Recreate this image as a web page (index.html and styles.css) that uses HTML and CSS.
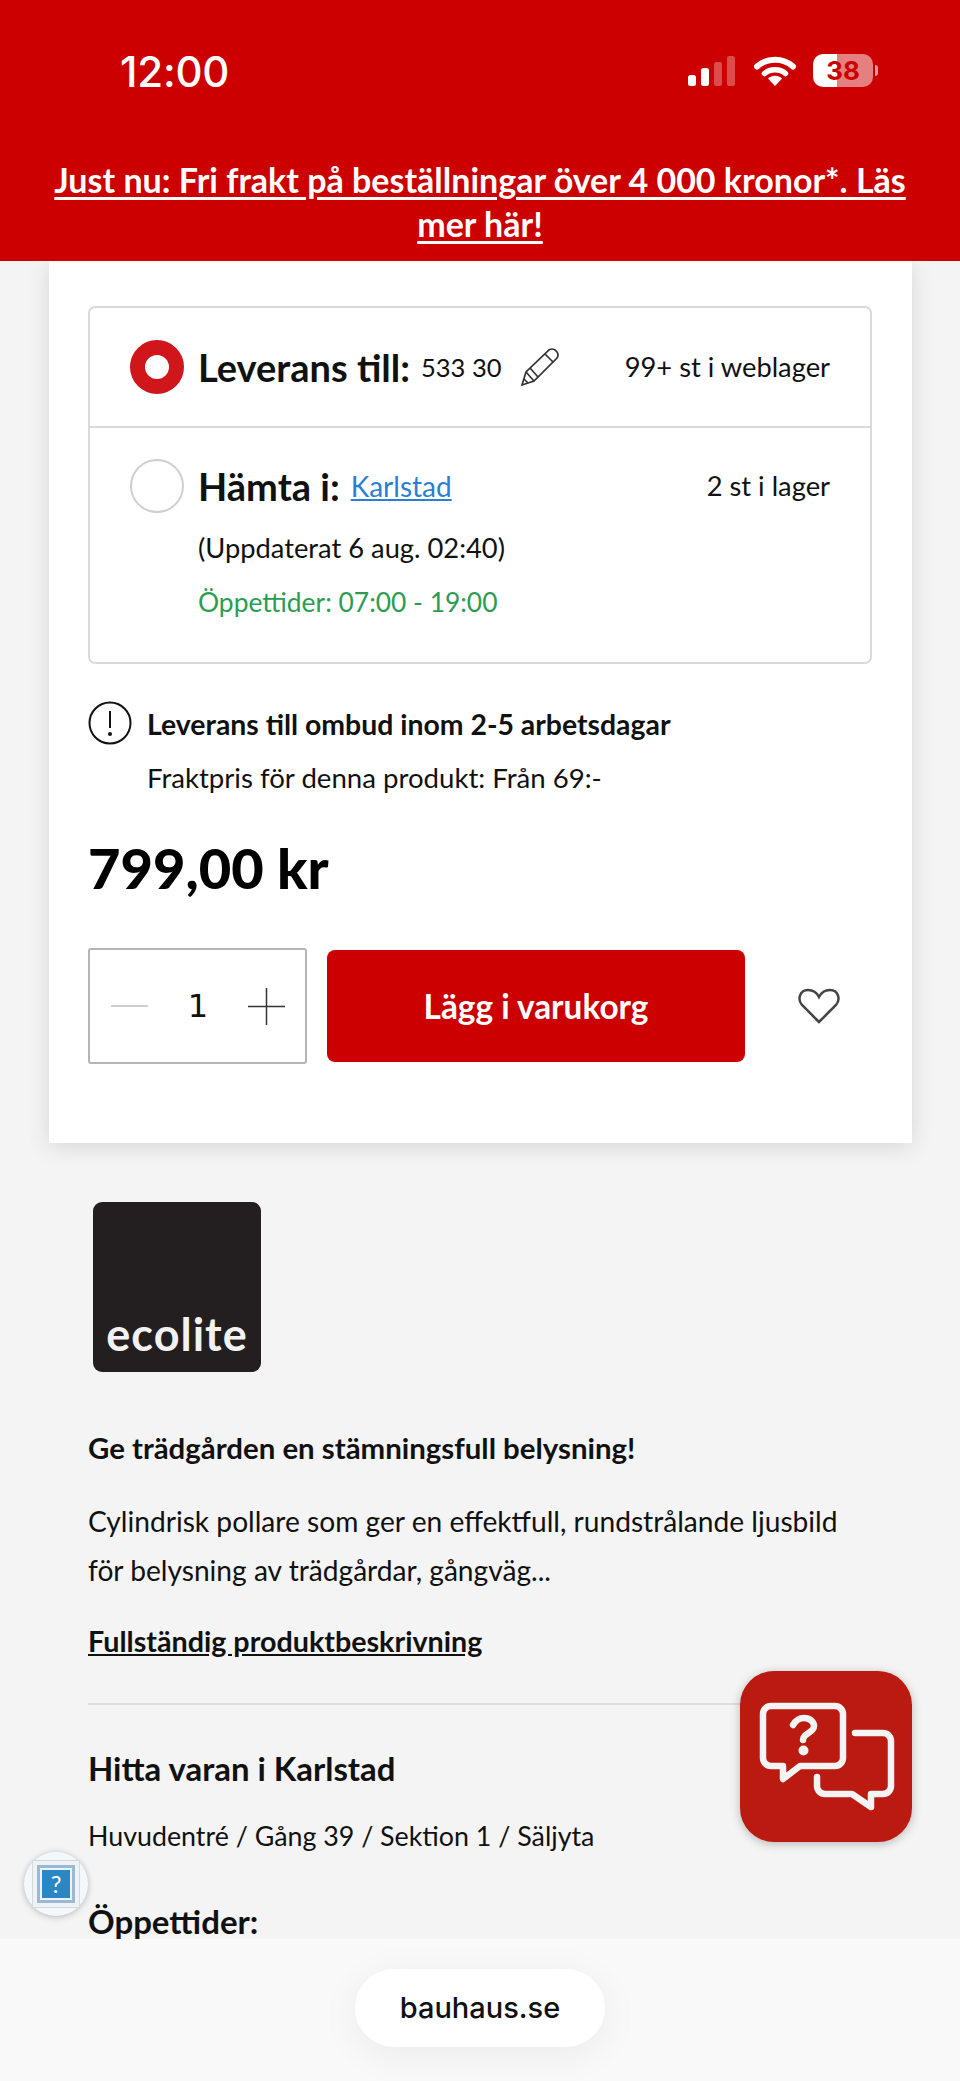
FILE: index.html
```html
<!DOCTYPE html>
<html lang="sv">
<head>
<meta charset="utf-8">
<title>Bauhaus</title>
<link rel="stylesheet" href="styles.css">
</head>
<body>
<div class="screen">
  <header class="header">
    <div class="status">
      <span class="time">12:00</span>
      <div class="status-icons">
        <svg class="signal" width="48" height="30" viewBox="0 0 48 30"><rect x="0" y="19" width="8" height="11" rx="2.5" fill="#fff"/><rect x="13" y="12" width="8" height="18" rx="2.5" fill="#fff"/><rect x="26" y="6" width="8" height="24" rx="2.5" fill="#fff" opacity=".3"/><rect x="39" y="0" width="8" height="30" rx="2.5" fill="#fff" opacity=".3"/></svg>
        <svg class="wifi" width="42" height="30" viewBox="0 0 42 30"><path d="M3 10.5C13 1.5 29 1.500 39 10.500" fill="none" stroke="#fff" stroke-width="6" stroke-linecap="round"/><path d="M10.500 17.500C16 12.500 26 12.500 31.500 17.500" fill="none" stroke="#fff" stroke-width="5.500" stroke-linecap="round"/><path d="M14 22.500C18 18.800 24 18.800 28 22.500L21 30Z" fill="#fff"/></svg>
        <div class="battery"><span class="battery-num">38</span></div>
      </div>
    </div>
    <p class="promo"><a href="#">Just nu: Fri frakt på beställningar över 4 000 kronor*. Läs mer här!</a></p>
  </header>

  <main class="main">
    <section class="card">
      <div class="options">
        <div class="option option-first">
          <span class="radio radio-on"></span>
          <span class="opt-title">Leverans till:</span>
          <span class="zip">533 30</span>
          <svg class="pencil" width="40" height="40" viewBox="0 0 40 40" fill="none" stroke="#333" stroke-width="1.700"><path d="M2 38 L6 25 L29 3 Q32 1 35 3 L37 5 Q39 8 37 11 L14 34 Z"/><path d="M6 25 L14 34 M10 21 L18 30 M25 7 L33 15 M4 32 L8 36"/></svg>
          <span class="stock">99+ st i weblager</span>
        </div>
        <div class="option option-second">
          <div class="option-head">
            <span class="radio"></span>
            <span class="opt-title">Hämta i:</span>
            <a class="store" href="#">Karlstad</a>
            <span class="stock">2 st i lager</span>
          </div>
          <p class="opt-line">(Uppdaterat 6 aug. 02:40)</p>
          <p class="opt-line opt-open">Öppettider: 07:00 - 19:00</p>
        </div>
      </div>

      <div class="notice">
        <svg class="notice-icon" width="44" height="44" viewBox="0 0 44 44" fill="none" stroke="#111" stroke-width="2"><circle cx="22" cy="22" r="20.500"/><path d="M22 10 V27"/><circle cx="22" cy="33" r="1" fill="#111"/></svg>
        <div>
          <p class="notice-title">Leverans till ombud inom 2-5 arbetsdagar</p>
          <p class="notice-text">Fraktpris för denna produkt: Från 69:-</p>
        </div>
      </div>

      <p class="price">799,00 kr</p>

      <div class="buy">
        <div class="qty">
          <svg width="37" height="2" viewBox="0 0 37 2"><rect width="37" height="2" fill="#d0d0d0"/></svg>
          <span class="qty-num">1</span>
          <svg width="37" height="37" viewBox="0 0 37 37"><path d="M0 18.500 H37 M18.500 0 V37" stroke="#333" stroke-width="1.500"/></svg>
        </div>
        <button class="add">Lägg i varukorg</button>
        <svg class="heart" width="42" height="36" viewBox="0 0 42 36" fill="none" stroke="#444" stroke-width="2.500"><path d="M21 34 L4 17 C-1 11 2 2 10 2 C15 2 19 5 21 9 C23 5 27 2 32 2 C40 2 43 11 38 17 Z"/></svg>
      </div>
    </section>

    <section class="details">
      <div class="logo"><span class="logo-text">ecolite</span></div>
      <h2 class="lead">Ge trädgården en stämningsfull belysning!</h2>
      <p class="desc">Cylindrisk pollare som ger en effektfull, rundstrålande ljusbild<br>för belysning av trädgårdar, gångväg...</p>
      <a class="more" href="#">Fullständig produktbeskrivning</a>
      <hr class="rule">
      <h3 class="find">Hitta varan i Karlstad</h3>
      <p class="path">Huvudentré / Gång 39 / Sektion 1 / Säljyta</p>
      <h3 class="hours">Öppettider:</h3>
    </section>

    <button class="help"><span class="help-frame"><span class="help-blue">?</span></span></button>

    <button class="chat">
      <svg width="172" height="171" viewBox="0 0 172 171" fill="none" stroke="#f4f4f4" stroke-width="6.500" stroke-linecap="round" stroke-linejoin="round">
        <path d="M31 35 H95 a8 8 0 0 1 8 8 V87 a8 8 0 0 1 -8 8 H60 L43 108 V95 H31 a8 8 0 0 1 -8 -8 V43 a8 8 0 0 1 8 -8 Z"/>
        <path d="M53 54 c3 -5 7 -7 11 -7 c6 0 10 4 10 8 c0 7 -11 7 -11 14"/>
        <circle cx="63.500" cy="79.500" r="3" fill="#f4f4f4" stroke-width="4"/>
        <path d="M115 62 H143 a8 8 0 0 1 8 8 V115 a8 8 0 0 1 -8 8 H131 V136 L112 123 H85 a8 8 0 0 1 -8 -8 V106"/>
      </svg>
    </button>
  </main>

  <footer class="browser">
    <div class="url">bauhaus.se</div>
  </footer>
</div>
</body>
</html>
```
FILE: styles.css
```css
* { box-sizing: border-box; }
html, body { margin: 0; padding: 0; }
body { width: 960px; height: 2081px; overflow: hidden; font-family: "Lato", "Liberation Sans", sans-serif; color: #111; }
p, h2, h3 { margin: 0; }
.screen { display: flex; flex-direction: column; height: 2081px; }

.header { height: 261px; flex: none; background: #cc0000; color: #fff; }
.status { display: flex; justify-content: space-between; align-items: flex-start; height: 158px; padding: 48px 87px 0 120px; }
.time { font-family: "Inter", sans-serif; font-size: 42px; font-weight: 500; line-height: 48px; letter-spacing: -.2px; }
.status-icons { display: flex; align-items: flex-start; padding-top: 8px; }
.signal { display: block; margin-right: 18px; }
.wifi { display: block; margin-right: 17px; }
.battery { position: relative; width: 60px; height: 33px; margin-top: -2px; border-radius: 10px; background: linear-gradient(90deg, #fff 0 24px, rgba(255,255,255,.5) 24px); display: flex; align-items: center; justify-content: center; }
.battery::after { content: ""; position: absolute; right: -5px; top: 11px; width: 3px; height: 11px; border-radius: 0 3px 3px 0; background: rgba(255,255,255,.6); }
.battery-num { font-family: "Inter", sans-serif; font-size: 26px; font-weight: 700; color: #cc0000; line-height: 33px; }
.promo { padding: 0 30px; text-align: center; font-size: 34px; line-height: 44px; font-weight: 700; }
.promo a { color: #fff; text-decoration: underline; text-underline-offset: 4px; }

.main { position: relative; flex: 1; min-height: 0; overflow: hidden; background: #f4f4f4; }
.card { width: 863px; margin-left: 49px; padding: 45px 40px 79px 39px; background: #fff; box-shadow: 0 4px 22px rgba(0,0,0,.12); }

.options { border: 2px solid #dadada; border-radius: 7px; }
.option-first { display: flex; align-items: center; height: 120px; padding: 0 40px; border-bottom: 2px solid #dadada; }
.option-second { padding: 32px 40px 33px; }
.option-head { display: flex; align-items: center; height: 52px; margin-bottom: 9px; }
.radio { flex: none; width: 54px; height: 54px; margin-right: 14px; border-radius: 50%; border: 2px solid #cfcfcf; background: #fff; }
.radio-on { border: 15px solid #d0161b; }
.opt-title { font-size: 38px; font-weight: 700; line-height: 44px; }
.zip { margin-left: 11px; font-size: 25.5px; line-height: 44px; }
.pencil { margin-left: 18px; }
.store { margin-left: 11px; font-size: 28px; line-height: 44px; color: #2a7fd4; }
.stock { margin-left: auto; font-size: 27.3px; line-height: 44px; }
.opt-line { padding-left: 68px; font-size: 27.3px; line-height: 54px; }
.opt-open { font-size: 26.4px; color: #2a9d50; }

.notice { display: flex; gap: 15px; margin-top: 33px; margin-left: 0; }
.notice-icon { flex: none; margin-top: 4px; }
.notice-title { font-size: 28.4px; font-weight: 700; line-height: 54px; }
.notice-text { font-size: 27.6px; line-height: 54px; }
.price { margin-top: 28px; font-size: 56px; font-weight: 900; line-height: 70px; color: #000; }

.buy { display: flex; align-items: center; margin-top: 45px; height: 116px; }
.qty { display: flex; align-items: center; justify-content: space-between; width: 219px; height: 116px; padding: 0 20px 0 21px; border: 2px solid #b5b5b5; border-radius: 3px; }
.qty-num { font-family: "DejaVu Sans", sans-serif; font-size: 32px; line-height: 40px; }
.add { width: 418px; height: 112px; margin-left: 20px; border: 0; border-radius: 8px; background: #cc0000; color: #fff; font-family: inherit; font-size: 33.4px; font-weight: 700; }
.heart { margin-left: 53px; }

.details { padding: 59px 88px 0; }
.logo { display: flex; align-items: flex-end; justify-content: center; width: 168px; height: 170px; margin-left: 5px; padding-bottom: 10px; border-radius: 9px; background: #231f20; }
.logo-text { font-family: "Lato", sans-serif; font-size: 45px; font-weight: 700; line-height: 56px; color: #f2f2f2; letter-spacing: 1px; }
.lead { margin-top: 56px; font-size: 29.4px; font-weight: 700; line-height: 40px; }
.desc { margin-top: 29px; font-size: 28.15px; line-height: 49px; }
.more { display: block; margin-top: 26px; font-size: 28.7px; font-weight: 700; line-height: 40px; color: #111; text-decoration: underline; }
.rule { height: 2px; margin: 42px 0 0; border: 0; background: #dcdcdc; }
.find { margin-top: 42px; font-size: 32.9px; font-weight: 700; line-height: 44px; }
.path { margin-top: 25px; font-size: 26.8px; line-height: 40px; }
.hours { margin-top: 43px; font-size: 33px; font-weight: 700; line-height: 44px; }

.help { position: absolute; left: 24px; top: 1591px; display: flex; align-items: center; justify-content: center; width: 64px; height: 64px; padding: 0; border: 0; border-radius: 50%; background: #f3f8fc; box-shadow: 0 1px 6px rgba(0,0,0,.25); }
.help-frame { display: flex; align-items: center; justify-content: center; width: 48px; height: 48px; border: 1px solid #d8d8d8; background: #eef3f8; }
.help-blue { display: block; width: 38px; height: 38px; border: 3px solid #9db8d4; background: #2a86c4; outline: 2px solid #eef3f8; outline-offset: -5px; color: #fff; font-family: "Lato", sans-serif; font-size: 24px; line-height: 32px; text-align: center; }

.chat { position: absolute; left: 740px; top: 1410px; width: 172px; height: 171px; padding: 0; border: 0; border-radius: 34px; background: #bb1a10; box-shadow: 0 2px 10px rgba(0,0,0,.25); }
.chat svg { display: block; }

.browser { flex: none; display: flex; justify-content: center; height: 142px; padding-top: 30px; background: #f9f9f9; }
.url { width: 250px; height: 78px; border-radius: 39px; background: #fff; box-shadow: 0 8px 40px rgba(0,0,0,.06); font-family: "Inter", sans-serif; font-size: 29px; font-weight: 500; line-height: 78px; text-align: center; color: #111; }
```
